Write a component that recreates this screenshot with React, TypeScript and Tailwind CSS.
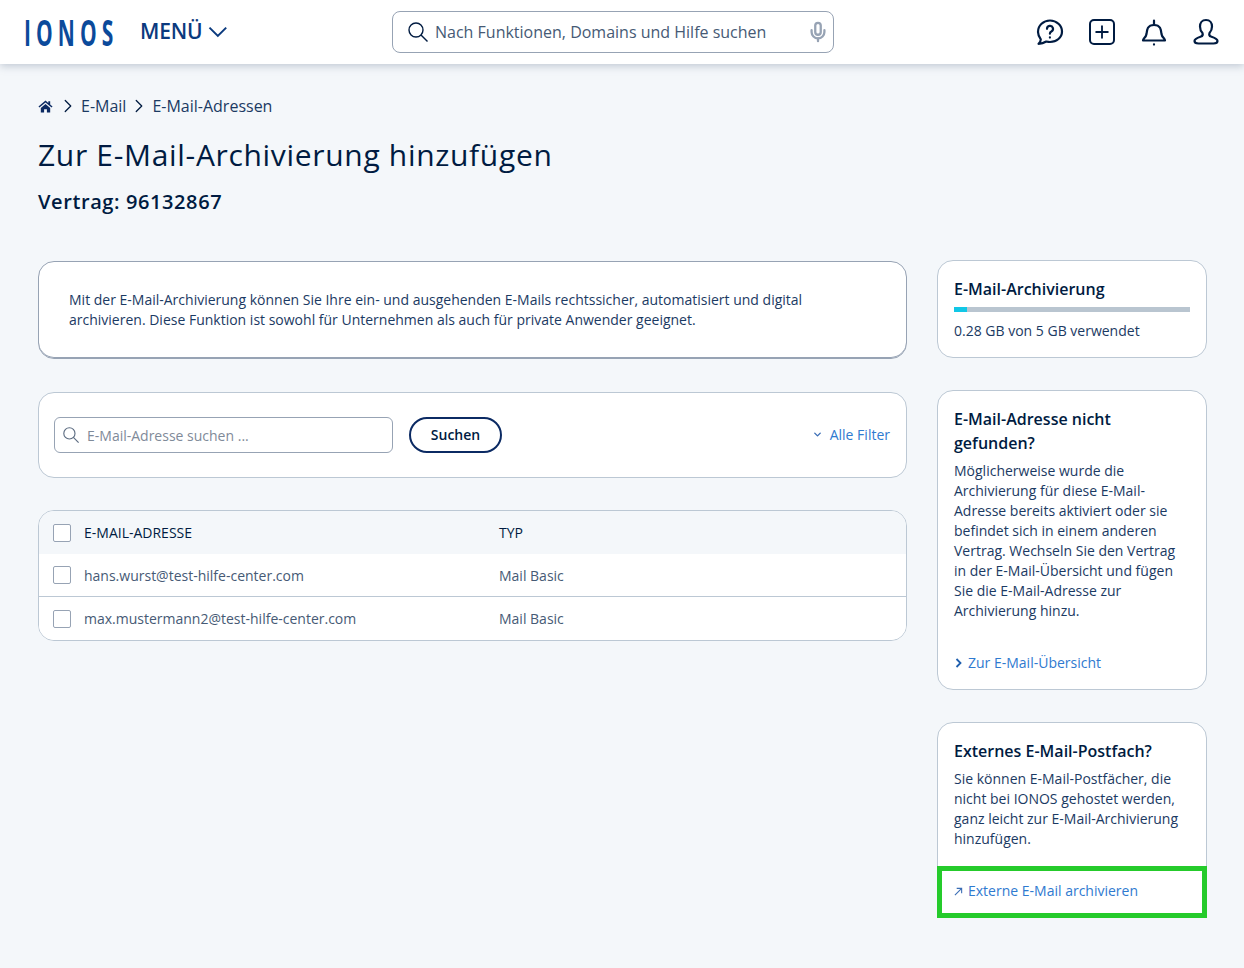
import { ChevronDown, ChevronRight, Mic, Plus } from "lucide-react";

const font = { fontFamily: '"Open Sans", sans-serif' };

function Checkbox() {
  return <span className="block h-[18px] w-[18px] shrink-0 rounded-[2px] border border-[#97a3b4] bg-white" />;
}

function Row({ mail, type, head, last }: { mail: string; type: string; head?: boolean; last?: boolean }) {
  return (
    <div
      className={`flex h-[43px] items-center pl-[14px] text-[14px] ${head ? "bg-[#f4f7fa] text-[#001b41]" : "bg-white text-[#465a75]"} ${last || head ? "" : "border-b border-[#bcc8d4]"}`}
    >
      <Checkbox />
      <span className="ml-[13px] w-[415px]">{mail}</span>
      <span>{type}</span>
    </div>
  );
}

function HomeIcon() {
  return (
    <svg viewBox="0 0 16 16" className="h-[15px] w-[15px]" fill="#0b2a63">
      <path d="M8 1.5 .5 8l1 1.1L8 3.6l6.500 5.500 1-1.100-2.500-2.200V2.500h-2v1.700z" />
      <path d="M3 9.500 8 5.200l5 4.300V14.500H9.500V11h-3v3.500H3z" />
    </svg>
  );
}

function SearchGlyph({ className, color }: { className: string; color: string }) {
  return (
    <svg viewBox="0 0 20 20" className={className} fill="none" stroke={color} strokeWidth="1.400">
      <circle cx="8" cy="8" r="7" />
      <path d="m13 13 6.500 6.500" />
    </svg>
  );
}

export default function App() {
  return (
    <div className="min-h-[968px] bg-[#f4f7fa] text-[#001b41]" style={font}>
      <header className="flex h-[64px] items-center bg-white pl-[25px] pr-[24px] shadow-[0_2px_8px_rgba(113,128,150,0.4)]">
        <span className="-ml-px w-[90px] origin-left scale-x-[0.6] text-[35px] font-bold leading-none tracking-[8.500px] whitespace-nowrap text-[#0b4a9b]">
          IONOS
        </span>
        <span className="ml-[26px] flex w-[88px] items-center gap-[6px] text-[21px] font-semibold tracking-[-0.2px] text-[#0b3a7e]">
          MENÜ
          <svg viewBox="0 0 20 12" className="h-[12px] w-[20px]" fill="none" stroke="#0b3a7e" strokeWidth="2">
            <path d="M1.500 1.500 10 10l8.500-8.500" />
          </svg>
        </span>
        <div className="ml-[164px] flex h-[42px] w-[442px] items-center rounded-[8px] border border-[#97a3b4] bg-white pl-[15px] pr-[4px]">
          <SearchGlyph className="h-[20px] w-[20px]" color="#001b41" />
          <span className="ml-[7px] flex-1 text-[16px] text-[#465a75]">Nach Funktionen, Domains und Hilfe suchen</span>
          <Mic className="h-[22px] w-[22px] text-[#97a3b4]" strokeWidth={2.500} />
        </div>
        <div className="ml-auto flex items-center gap-[24px]">
          <svg viewBox="0 0 28 28" className="h-[28px] w-[28px]" fill="none" stroke="#001b41" strokeWidth="2.200" strokeLinejoin="round" strokeLinecap="round">
            <path d="M2.500 25.800c1.500-1.200 2.300-2.600 2.300-4.500C3.300 19.300 2 16.800 2 14 2 7.400 7.400 2.500 14 2.500S26 7.400 26 13.500 20.600 24 14 24c-1.300 0-2.500-.2-3.700-.5-2.300 1.500-4.800 2.300-7.800 2.300z" />
            <path d="M11 10.800a3 3 0 1 1 4.400 2.700c-1 .5-1.500 1-1.500 2.200" />
            <path d="M13.900 19.300v.3" />
          </svg>
          <span className="flex h-[28px] w-[28px] items-center justify-center">
            <span className="flex h-[26px] w-[26px] items-center justify-center rounded-[5px] border-2 border-[#001b41]">
              <Plus className="h-[20px] w-[20px]" strokeWidth={2.200} />
            </span>
          </span>
          <svg viewBox="0 0 28 28" className="h-[28px] w-[28px]" fill="none" stroke="#001b41" strokeWidth="2.200" strokeLinejoin="round" strokeLinecap="round">
            <path d="M3 22.500h22c0-2-3-3-3.500-6.500-.5-4.500-1-9-7.500-9s-7 4.500-7.500 9C6 19.500 3 20.500 3 22.500z" />
            <path d="M14 2.500v4.500M14 26.300v.3" />
          </svg>
          <svg viewBox="0 0 28 28" className="h-[28px] w-[28px]" fill="none" stroke="#001b41" strokeWidth="2.200" strokeLinejoin="round">
            <path d="M14 2c-4 0-6 3-6 6.500 0 2.500 1 5 2.500 6.500.5 1.500 0 3-1.500 3.500-3 1-6.500 2-6.500 4.500 0 2 2 2.500 4 2.500h15c2 0 4-.5 4-2.500 0-2.500-3.500-3.500-6.500-4.500-1.500-.5-2-2-1.500-3.500C18.900 13.500 20 11 20 8.500 20 5 18 2 14 2z" />
          </svg>
        </div>
      </header>

      <main className="pl-[38px] pr-[37px] pt-[32px]">
        <nav className="flex h-[20px] items-center text-[16px] text-[#1b3a63]">
          <HomeIcon />
          <ChevronRight className="ml-[4px] h-[22px] w-[22px] text-[#001b41]" strokeWidth={1.400} />
          <span className="ml-[2px]">E-Mail</span>
          <ChevronRight className="ml-[2px] h-[22px] w-[22px] text-[#001b41]" strokeWidth={1.400} />
          <span className="ml-[2px]">E-Mail-Adressen</span>
        </nav>
        <h1 className="mt-[17px] h-[44px] text-[30px] leading-[44px] tracking-[0.68px] text-[#001b41]">
          Zur E-Mail-Archivierung hinzufügen
        </h1>
        <h2 className="mt-[10px] h-[30px] text-[20px] font-semibold leading-[30px] tracking-[0.6px]">Vertrag: 96132867</h2>

        <div className="mt-[44px] flex gap-[30px]">
          <div className="flex w-[869px] flex-col gap-[33px]">
            <section className="h-[98px] rounded-[16px] border border-[#97a3b4] bg-white px-[30px] pt-[28px] text-[14px] leading-[20px] text-[#1b3a63] shadow-[inset_0_-1px_0_#97a3b4]">
              Mit der E-Mail-Archivierung können Sie Ihre ein- und ausgehenden E-Mails rechtssicher, automatisiert und digital archivieren. Diese Funktion ist sowohl für Unternehmen als auch für private Anwender geeignet.
            </section>

            <section className="flex h-[86px] items-center rounded-[16px] border border-[#bcc8d4] bg-white pl-[15px] pr-[16px]">
              <div className="flex h-[36px] w-[339px] items-center rounded-[6px] border border-[#97a3b4] pl-[8px]">
                <SearchGlyph className="h-[16px] w-[16px]" color="#5b6b80" />
                <span className="ml-[8px] text-[14px] text-[#7f8a99]">E-Mail-Adresse suchen ...</span>
              </div>
              <button className="ml-[16px] h-[36px] w-[93px] rounded-full border-2 border-[#0b2a63] pb-[2px] text-[14px] font-semibold text-[#001b41]">
                Suchen
              </button>
              <span className="ml-auto -mt-[2px] flex items-center gap-[7px] text-[14px] text-[#2f7ad0]">
                <ChevronDown className="h-[11px] w-[11px] text-[#3a6db5]" strokeWidth={3} />
                Alle Filter
              </span>
            </section>

            <section className="-mt-px overflow-hidden rounded-[16px] border border-[#bcc8d4] bg-white">
              <Row head mail="E-MAIL-ADRESSE" type="TYP" />
              <Row mail="hans.wurst@test-hilfe-center.com" type="Mail Basic" />
              <Row last mail="max.mustermann2@test-hilfe-center.com" type="Mail Basic" />
            </section>
          </div>

          <aside className="-mt-px flex w-[270px] flex-col gap-[32px]">
            <section className="h-[98px] rounded-[16px] border border-[#bcc8d4] bg-white px-[16px] pt-[16px]">
              <h3 className="text-[16px] font-semibold leading-[24px] text-[#001b41]">E-Mail-Archivierung</h3>
              <div className="mt-[6px] h-[5px] bg-[#b9c5d0]">
                <div className="h-full bg-[#11c7e6]" style={{ width: "5.600%" }} />
              </div>
              <p className="mt-[9px] text-[14px] leading-[20px] text-[#1b3a63]">0.28 GB von 5 GB verwendet</p>
            </section>

            <section className="flex h-[300px] flex-col rounded-[16px] border border-[#bcc8d4] bg-white px-[16px] pt-[16px]">
              <h3 className="text-[16px] font-semibold leading-[24px] text-[#001b41]">E-Mail-Adresse nicht gefunden?</h3>
              <p className="mt-[6px] text-[14px] leading-[20px] text-[#1b3a63]">
                Möglicherweise wurde die Archivierung für diese E-Mail-Adresse bereits aktiviert oder sie befindet sich in einem anderen Vertrag. Wechseln Sie den Vertrag in der E-Mail-Übersicht und fügen Sie die E-Mail-Adresse zur Archivierung hinzu.
              </p>
              <span className="mt-auto mb-[16px] flex items-center text-[14px] leading-[20px] text-[#2f7ad0]">
                <svg viewBox="0 0 14 10" className="h-[10px] w-[14px]" fill="none" stroke="#1f5fae" strokeWidth="1.800">
                  <path d="M2.500 1 6.500 5l-4 4" />
                </svg>
                Zur E-Mail-Übersicht
              </span>
            </section>

            <section className="relative h-[196px] rounded-[16px] border border-[#bcc8d4] bg-white px-[16px] pt-[16px]">
              <h3 className="text-[16px] font-semibold leading-[24px] text-[#001b41]">Externes E-Mail-Postfach?</h3>
              <p className="mt-[6px] text-[14px] leading-[20px] text-[#1b3a63]">
                Sie können E-Mail-Postfächer, die nicht bei IONOS gehostet werden, ganz leicht zur E-Mail-Archivierung hinzufügen.
              </p>
              <div className="absolute bottom-[-1px] left-[-1px] right-[-1px] flex h-[52px] items-center border-[5px] border-[#25cb2b] bg-white pb-[4px] pl-[12px] text-[14px] text-[#2f7ad0]">
                <svg viewBox="0 0 10 10" className="mr-[5px] mt-[2px] h-[9px] w-[9px]" fill="none" stroke="#3a6db5" strokeWidth="1.200">
                  <path d="M1 9 8.500 1.500M3 1.500h5.500V7" />
                </svg>
                Externe E-Mail archivieren
              </div>
            </section>
          </aside>
        </div>
      </main>
    </div>
  );
}
